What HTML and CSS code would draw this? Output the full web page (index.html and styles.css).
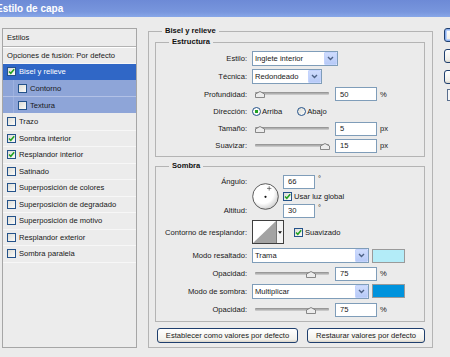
FILE: index.html
```html
<!DOCTYPE html>
<html lang="es">
<head>
<meta charset="utf-8">
<title>Estilo de capa</title>
<link rel="stylesheet" href="styles.css">
</head>
<body>
<div class="titlebar"><span class="title">Estilo de capa</span></div>
<div class="main">
  <div class="styles-panel">
    <div class="sp-row sp-head">Estilos</div>
    <div class="sp-row sp-blend">Opciones de fusión: Por defecto</div>
    <div class="sp-row sp-item selected"><span class="cb"><svg viewBox="0 0 7 7" class="chk"><path d="M1 3.4 L2.8 5.3 L6.2 1.2"/></svg></span>Bisel y relieve</div>
    <div class="sp-row sp-sub"><div class="sp-subinner"><span class="cb"></span>Contorno</div></div>
    <div class="sp-row sp-sub last"><div class="sp-subinner"><span class="cb"></span>Textura</div></div>
    <div class="sp-row sp-item"><span class="cb"></span>Trazo</div>
    <div class="sp-row sp-item"><span class="cb"><svg viewBox="0 0 7 7" class="chk"><path d="M1 3.4 L2.8 5.3 L6.2 1.2"/></svg></span>Sombra interior</div>
    <div class="sp-row sp-item"><span class="cb"><svg viewBox="0 0 7 7" class="chk"><path d="M1 3.4 L2.8 5.3 L6.2 1.2"/></svg></span>Resplandor interior</div>
    <div class="sp-row sp-item"><span class="cb"></span>Satinado</div>
    <div class="sp-row sp-item"><span class="cb"></span>Superposición de colores</div>
    <div class="sp-row sp-item"><span class="cb"></span>Superposición de degradado</div>
    <div class="sp-row sp-item"><span class="cb"></span>Superposición de motivo</div>
    <div class="sp-row sp-item"><span class="cb"></span>Resplandor exterior</div>
    <div class="sp-row sp-item"><span class="cb"></span>Sombra paralela</div>
  </div>

  <fieldset class="group outer">
    <legend class="lg-outer">Bisel y relieve</legend>

    <fieldset class="group sub estructura">
      <legend class="lg-sub">Estructura</legend>
      <div class="frow h17">
        <span class="lbl">Estilo:</span>
        <div class="select w86"><span class="sel-text">Inglete interior</span><span class="sel-btn"><svg viewBox="0 0 9 9"><path d="M2 3 L4.5 5.5 L7 3"/></svg></span></div>
      </div>
      <div class="frow h18">
        <span class="lbl">Técnica:</span>
        <div class="select w70"><span class="sel-text">Redondeado</span><span class="sel-btn"><svg viewBox="0 0 9 9"><path d="M2 3 L4.5 5.5 L7 3"/></svg></span></div>
      </div>
      <div class="frow h18">
        <span class="lbl">Profundidad:</span>
        <div class="slider"><div class="track"></div><svg class="thumb" style="left:3px" viewBox="0 0 10 7"><polygon points="0.5,6.5 0.5,3 5,0.5 9.5,3 9.5,6.5"/></svg></div>
        <span class="input w42">50</span><span class="unit">%</span>
      </div>
      <div class="frow h17">
        <span class="lbl">Dirección:</span>
        <span class="radio on"></span><span class="rtext">Arriba</span>
        <span class="radio"></span><span class="rtext">Abajo</span>
      </div>
      <div class="frow h17">
        <span class="lbl">Tamaño:</span>
        <div class="slider"><div class="track"></div><svg class="thumb" style="left:3px" viewBox="0 0 10 7"><polygon points="0.5,6.5 0.5,3 5,0.5 9.5,3 9.5,6.5"/></svg></div>
        <span class="input w42">5</span><span class="unit">px</span>
      </div>
      <div class="frow h17">
        <span class="lbl">Suavizar:</span>
        <div class="slider"><div class="track"></div><svg class="thumb" style="left:68px" viewBox="0 0 10 7"><polygon points="0.5,6.5 0.5,3 5,0.5 9.5,3 9.5,6.5"/></svg></div>
        <span class="input w42">15</span><span class="unit">px</span>
      </div>
    </fieldset>

    <fieldset class="group sub sombra">
      <legend class="lg-sub">Sombra</legend>
      <div class="angle">
        <span class="lbl a1">Ángulo:</span>
        <svg class="dial" viewBox="0 0 27 27">
          <defs><radialGradient id="dg" cx="0.4" cy="0.35" r="0.7"><stop offset="0.6" stop-color="#ffffff"/><stop offset="1" stop-color="#c9c9c9"/></radialGradient></defs>
          <circle cx="13.5" cy="13.5" r="12.8" fill="url(#dg)" stroke="#4a4a4a" stroke-width="0.9"/>
          <circle cx="13.5" cy="13.8" r="1.1" fill="#111"/>
          <path d="M17.2 3.2 V7.6 M15 5.4 H19.4" stroke="#333" stroke-width="0.6"/>
        </svg>
        <div class="acell r1"><span class="input w32">66</span><span class="deg">°</span></div>
        <div class="acell r2"><span class="cb"><svg viewBox="0 0 7 7" class="chk"><path d="M1 3.4 L2.8 5.3 L6.2 1.2"/></svg></span><span class="cbtext">Usar luz global</span></div>
        <div class="acell r3"><span class="input w32">30</span><span class="deg">°</span></div>
        <span class="lbl a2">Altitud:</span>
      </div>
      <div class="frow h28">
        <span class="lbl">Contorno de resplandor:</span>
        <div class="contour">
          <svg class="cprev" viewBox="0 0 23 22" preserveAspectRatio="none"><rect width="23" height="22" fill="#fff"/><polygon points="0,22 23,0 23,22" fill="#a3a3a3"/></svg>
          <span class="carrow"><svg viewBox="0 0 5 3"><polygon points="0,0 5,0 2.5,3"/></svg></span>
        </div>
        <span class="cb cb-gap"><svg viewBox="0 0 7 7" class="chk"><path d="M1 3.4 L2.8 5.3 L6.2 1.2"/></svg></span><span class="cbtext">Suavizado</span>
      </div>
      <div class="frow h19">
        <span class="lbl">Modo resaltado:</span>
        <div class="select w117"><span class="sel-text">Trama</span><span class="sel-btn"><svg viewBox="0 0 9 9"><path d="M2 3 L4.5 5.5 L7 3"/></svg></span></div>
        <span class="swatch light"></span>
      </div>
      <div class="frow h17">
        <span class="lbl">Opacidad:</span>
        <div class="slider"><div class="track"></div><svg class="thumb" style="left:54px" viewBox="0 0 10 7"><polygon points="0.5,6.5 0.5,3 5,0.5 9.5,3 9.5,6.5"/></svg></div>
        <span class="input w42">75</span><span class="unit">%</span>
      </div>
      <div class="frow h18">
        <span class="lbl">Modo de sombra:</span>
        <div class="select w117"><span class="sel-text">Multiplicar</span><span class="sel-btn"><svg viewBox="0 0 9 9"><path d="M2 3 L4.5 5.5 L7 3"/></svg></span></div>
        <span class="swatch dark"></span>
      </div>
      <div class="frow h19">
        <span class="lbl">Opacidad:</span>
        <div class="slider"><div class="track"></div><svg class="thumb" style="left:54px" viewBox="0 0 10 7"><polygon points="0.5,6.5 0.5,3 5,0.5 9.5,3 9.5,6.5"/></svg></div>
        <span class="input w42">75</span><span class="unit">%</span>
      </div>
    </fieldset>

    <div class="buttons">
      <button class="btn b1">Establecer como valores por defecto</button>
      <button class="btn b2">Restaurar valores por defecto</button>
    </div>
  </fieldset>

  <div class="side">
    <div class="pbtn default"></div>
    <div class="pbtn"></div>
    <div class="pbtn"></div>
    <div class="pcheck"></div>
  </div>
</div>
</body>
</html>
```

FILE: styles.css
```css
* { box-sizing: border-box; }
html, body { margin: 0; padding: 0; }
body {
  width: 450px;
  height: 357px;
  overflow: hidden;
  background: #ebebeb;
  font-family: "Liberation Sans", Arial, sans-serif;
  font-size: 7.6px;
  color: #181818;
}

/* title bar */
.titlebar {
  height: 17px;
  background: linear-gradient(#6d8ad6, #7896dd 70%, #88a7e8);
  display: flex;
  align-items: center;
}
.title {
  margin-left: -4px;
  color: #fff;
  font-weight: bold;
  font-size: 10px;
}

.main {
  display: flex;
  align-items: flex-start;
  padding: 11px 0 0 2px;
}

/* styles list */
.styles-panel {
  flex: none;
  width: 135px;
  height: 320px;
  border: 1px solid #a6a6a6;
  background: #ececec;
}
.sp-row {
  display: flex;
  align-items: center;
  padding-left: 4px;
  height: 16.5px;
  border-bottom: 1px solid #f7f7f7;
  white-space: nowrap;
}
.sp-head { height: 18px; border-bottom: 1px solid #b3b3b3; box-shadow: 0 1px 0 #fff; }
.sp-blend { height: 17px; }
.sp-row.selected { height: 16px; background: #3067c6; color: #fff; border-bottom-color: #3067c6; }
.sp-sub { height: 17px; padding-left: 0; background: #8ea5d8; border-bottom: 1px solid #b2c1e6; }
.sp-sub.last { border-bottom-color: #ececec; }
.sp-subinner {
  margin-left: 10px;
  height: 100%;
  flex: 1;
  display: flex;
  align-items: center;
  padding-left: 4px;
  border-left: 1px solid #9db1e0;
}
.sp-item .cb, .sp-subinner .cb { margin-right: 3px; }

/* checkbox */
.cb {
  flex: none;
  display: inline-flex;
  align-items: center;
  justify-content: center;
  width: 9px;
  height: 9px;
  border: 1px solid #24528a;
  background: linear-gradient(135deg, #dcdcd6, #fbfbf9);
}
.chk { width: 7px; height: 7px; }
.chk path { fill: none; stroke: #21a121; stroke-width: 1.5; }

/* group boxes */
.group {
  margin: 0;
  border: 1px solid #b4b4b4;
  min-width: 0;
}
.group legend {
  font-weight: bold;
  line-height: 10px;
  padding: 0 3px;
  color: #111;
}
.outer {
  flex: none;
  margin-left: 11px;
  margin-top: -2px;
  width: 285px;
  height: 322px;
  padding: 1px 7px 0 6px;
}
.lg-outer { margin-left: 7px; }
.sub { width: 270px; }
.lg-sub { margin-left: 13px; }
.estructura { padding: 3px 0 2px 0; }
.sombra { margin-top: 4px; padding: 3px 0 2px 0; }

/* form rows */
.frow { display: flex; align-items: center; white-space: nowrap; }
.h17 { height: 17px; }
.h18 { height: 18px; }
.h19 { height: 19px; }
.h28 { height: 28px; }
.lbl {
  flex: none;
  width: 91px;
  margin-right: 5px;
  text-align: right;
}

.select {
  flex: none;
  display: flex;
  align-items: stretch;
  height: 15px;
  border: 1px solid #7f9db9;
  background: #fff;
}
.w86 { width: 86px; }
.w70 { width: 70px; }
.w117 { width: 117px; }
.sel-text { flex: 1; padding-left: 2px; display: flex; align-items: center; }
.sel-btn {
  flex: none;
  width: 13px;
  display: flex;
  align-items: center;
  justify-content: center;
  background: linear-gradient(#cfdcfd, #b7caf7);
  border: 1px solid #c3d3fd;
  border-radius: 1px;
}
.sel-btn svg { width: 9px; height: 9px; }
.sel-btn path { fill: none; stroke: #4d6185; stroke-width: 1.4; }

.slider {
  flex: none;
  position: relative;
  width: 80px;
  height: 10px;
  margin-right: 3px;
}
.track {
  position: absolute;
  left: 3px;
  right: 3px;
  top: 3px;
  height: 3px;
  border-radius: 1px;
  background: linear-gradient(#8c8c8c, #d4d4d4);
}
.thumb {
  position: absolute;
  top: 2px;
  width: 10px;
  height: 7px;
}
.thumb polygon { fill: #ececec; stroke: #6f6f6f; stroke-width: 0.8; }

.input {
  flex: none;
  display: inline-flex;
  align-items: center;
  height: 14px;
  padding-left: 4px;
  border: 1px solid #7f9db9;
  background: #fff;
}
.w42 { width: 42px; }
.w32 { width: 32px; }
.unit { margin-left: 3px; }

.radio {
  flex: none;
  width: 9px;
  height: 9px;
  border-radius: 50%;
  border: 1px solid #24528a;
  background: linear-gradient(135deg, #dcdcd6, #fbfbf9);
  margin-right: 1px;
}
.radio.on { background: radial-gradient(circle, #21a121 0 1.6px, #fbfbf9 2px); }
.rtext { margin-right: 15px; }

/* angle block */
.angle {
  display: grid;
  grid-template-columns: 96px 31px auto;
  grid-template-rows: 15px 14px 15px;
  align-items: center;
}
.angle .a1 { grid-column: 1; grid-row: 1; }
.angle .a2 { grid-column: 1; grid-row: 3; }
.dial { grid-column: 2; grid-row: 1 / 4; width: 27px; height: 27px; }
.acell { grid-column: 3; display: flex; align-items: center; white-space: nowrap; }
.acell.r1 { grid-row: 1; }
.acell.r2 { grid-row: 2; }
.acell.r3 { grid-row: 3; }
.deg { align-self: flex-start; margin-left: 3px; line-height: 8px; }
.cbtext { margin-left: 2px; }

/* contour */
.contour {
  flex: none;
  display: flex;
  width: 32px;
  height: 24px;
  border: 1px solid #3e3e3e;
  background: #fff;
}
.cprev { width: 23px; height: 22px; display: block; }
.carrow {
  flex: 1;
  display: flex;
  align-items: center;
  justify-content: center;
  border-left: 1px solid #7a7a7a;
  background: #f4f4f4;
}
.carrow svg { width: 4px; height: 3px; }
.carrow polygon { fill: #111; }
.cb-gap { margin-left: 10px; }

.swatch {
  flex: none;
  width: 33px;
  height: 14px;
  margin-left: 3px;
  border: 1px solid #9a9a9a;
}
.swatch.light { background: #b3ecf8; }
.swatch.dark { background: #0093dd; }

/* bottom buttons */
.buttons {
  display: flex;
  gap: 9px;
  padding-left: 2px;
  margin-top: 6px;
}
.btn {
  font-family: inherit;
  font-size: 7.6px;
  color: #181818;
  height: 15px;
  padding: 0;
  border: 1px solid #1f3f6e;
  border-radius: 3px;
  background: linear-gradient(#ffffff, #f2f1ec 80%, #d9d4c9);
}
.b1 { width: 141px; }
.b2 { width: 118px; }

/* partially visible side buttons */
.side {
  flex: none;
  margin-left: 11px;
  display: flex;
  flex-direction: column;
}
.pbtn {
  width: 60px;
  height: 14px;
  border: 1px solid #1f3f6e;
  border-radius: 3px;
  background: linear-gradient(#ffffff, #f0efea 80%, #d9d4c9);
  margin-bottom: 7px;
}
.pbtn.default { box-shadow: inset 0 0 0 1px #8bb0f0, inset 0 0 0 2px #b9d0f7; }
.pcheck {
  margin-left: 3px;
  margin-top: -2px;
  width: 10px;
  height: 12px;
  border: 1px solid #5a6f8e;
  background: #f6f6f6;
}
```
